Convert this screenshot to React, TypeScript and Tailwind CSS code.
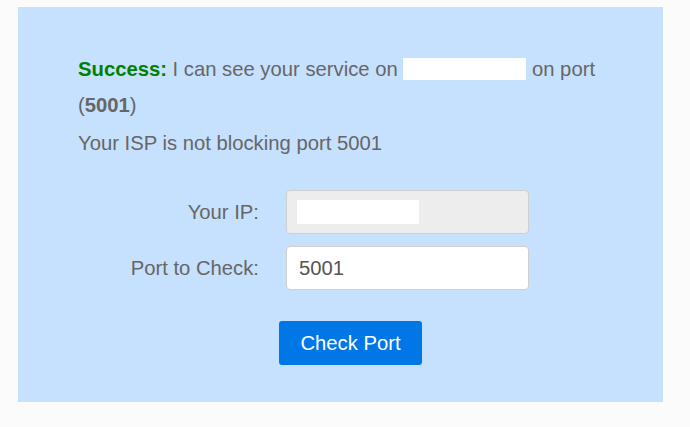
import React from "react";

export default function App() {
  return (
    <div
      className="w-[690px] h-[427px] bg-[#fbfbfb] pt-[7px] pl-[18px] overflow-hidden"
      style={{ fontFamily: '"Liberation Sans", Arial, Helvetica, sans-serif' }}
    >
      <div className="w-[645px] h-[395px] bg-[#c6e1fe] pl-[60px] pt-[44px] text-[20.25px] text-[#666666]">
        <p className="leading-[36px]">
          <span className="font-bold text-[#008000]">Success:</span> I can see your service on{" "}
          <span className="inline-block align-middle w-[123px] h-[22px] bg-white -mt-[3px]"></span>{" "}
          on port
          <br />(<span className="font-bold">5001</span>)
        </p>
        <p className="leading-[36px] mt-[2px]">Your ISP is not blocking port 5001</p>

        <div className="mt-[29px] flex flex-col gap-[12px]">
          <div className="flex items-center">
            <label className="w-[181px] text-right">Your IP:</label>
            <div className="ml-[27px] w-[243px] h-[44px] rounded-[4px] border border-[#cfcfcf] bg-[#ededed] flex items-center pl-[10px]">
              <div className="w-[122px] h-[24px] bg-white"></div>
            </div>
          </div>
          <div className="flex items-center">
            <label className="w-[181px] text-right">Port to Check:</label>
            <div className="ml-[27px] w-[243px] h-[44px] rounded-[4px] border border-[#cfcfcf] bg-white flex items-center pl-[12px] text-[#555555]">
              5001
            </div>
          </div>
        </div>

        <button className="mt-[31px] ml-[201px] w-[143px] h-[44px] rounded-[3px] bg-[#0077e6] text-white text-[20.25px] leading-none">
          Check Port
        </button>
      </div>
    </div>
  );
}
